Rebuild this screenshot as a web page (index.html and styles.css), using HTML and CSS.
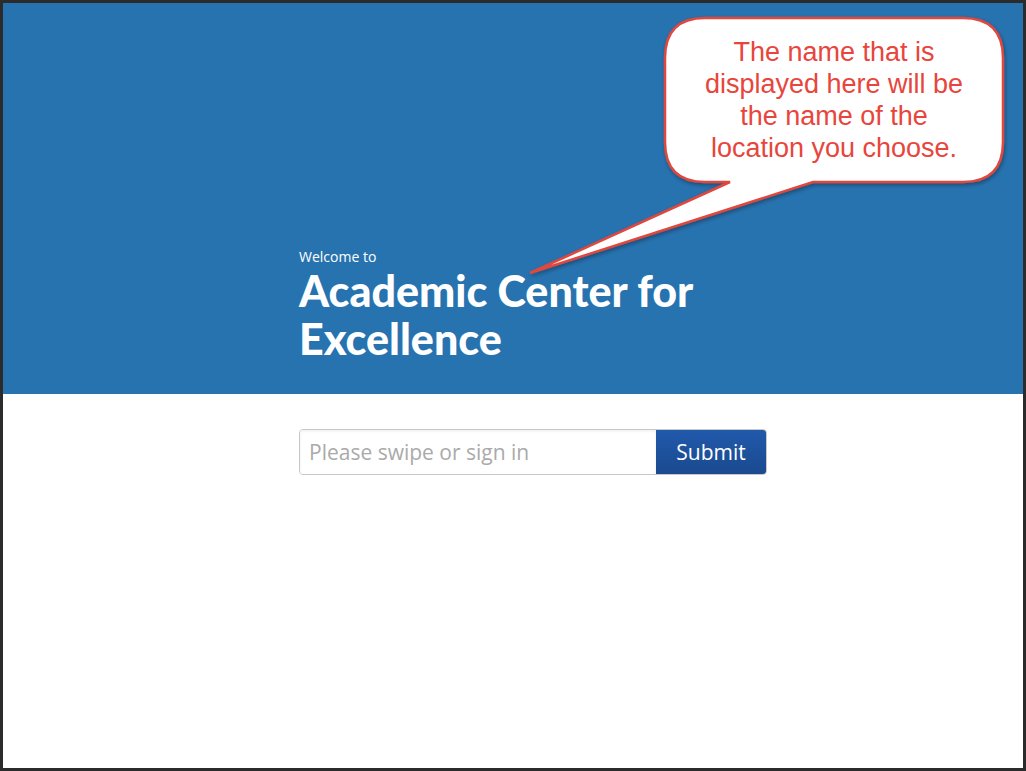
FILE: index.html
```html
<!DOCTYPE html>
<html lang="en">
<head>
    <meta charset="UTF-8">
    <meta name="viewport" content="width=device-width, initial-scale=1.0">
    <title>Academic Center for Excellence</title>
    <link rel="stylesheet" href="styles.css">
</head>
<body>

<div class="frame">
    <div class="hero">
        <div class="hero-inner">
            <p class="welcome">Welcome to</p>
            <h1 class="location">Academic Center for Excellence</h1>
        </div>
    </div>

    <div class="signin">
        <form class="signin-form" onsubmit="return false;">
            <input class="signin-input" type="text" placeholder="Please swipe or sign in">
            <button class="signin-btn" type="submit">Submit</button>
        </form>
    </div>
</div>

<!-- annotation callout drawn over the screenshot -->
<div class="callout">
    <svg class="callout-shape" width="1026" height="300" viewBox="0 0 1026 300">
        <defs>
            <filter id="shadow" x="-10%" y="-10%" width="120%" height="130%">
                <feDropShadow dx="1" dy="2" stdDeviation="2" flood-color="#000" flood-opacity="0.35"/>
            </filter>
        </defs>
        <path d="M705 18 H963 Q1003 18 1003 58 V142 Q1003 182 963 182 H813 L530 273 L730 182 H705 Q665 182 665 142 V58 Q665 18 705 18 Z"
              fill="#fff" stroke="#e0463e" stroke-width="2.5" stroke-linejoin="miter" filter="url(#shadow)"/>
    </svg>
    <div class="callout-text">The name that is displayed here will be the name of the location you choose.</div>
</div>

</body>
</html>
```

FILE: styles.css
```css
body {
    margin: 0;
    padding: 0;
    font-family: 'Open Sans', sans-serif;
    background: #fff;
}

.frame {
    width: 1026px;
    height: 771px;
    box-sizing: border-box;
    border: 3px solid #2b2b2b;
    background: #fff;
}

.hero {
    height: 391px;
    background-color: #2773b0;
    display: flex;
    flex-direction: column;
    justify-content: flex-end;
    box-sizing: border-box;
    padding-bottom: 31px;
}

.hero-inner {
    margin-left: 296px;
    width: 468px;
}

.welcome {
    margin: 0 0 3px;
    color: #fff;
    font-size: 14px;
    line-height: 14px;
}

.location {
    margin: 0;
    color: #fff;
    font-family: 'Lato', sans-serif;
    font-weight: 900;
    font-size: 43px;
    line-height: 48px;
}

.signin {
    padding-top: 35px;
}

.signin-form {
    margin-left: 296px;
    width: 468px;
    display: flex;
    height: 46px;
    border: 1px solid #c8c8c8;
    border-radius: 4px;
    box-sizing: border-box;
    overflow: hidden;
}

.signin-input {
    flex: 1;
    border: none;
    outline: none;
    padding: 0 9px;
    font-family: 'Open Sans', sans-serif;
    font-size: 21px;
    color: #333;
    box-shadow: inset 0 1px 3px rgba(0, 0, 0, 0.08);
}

.signin-input::placeholder {
    color: #aaa;
}

.signin-btn {
    width: 110px;
    border: none;
    background: linear-gradient(to bottom, #2159ab, #1a4a8f);
    color: #fff;
    font-family: 'Open Sans', sans-serif;
    font-size: 21px;
    cursor: pointer;
}

.callout {
    position: absolute;
    left: 0;
    top: 0;
}

.callout-shape {
    display: block;
}

.callout-text {
    position: absolute;
    left: 697px;
    top: 36px;
    width: 274px;
    text-align: center;
    color: #e8453c;
    font-family: 'Liberation Sans', Arial, sans-serif;
    font-size: 27px;
    line-height: 32px;
}
```
